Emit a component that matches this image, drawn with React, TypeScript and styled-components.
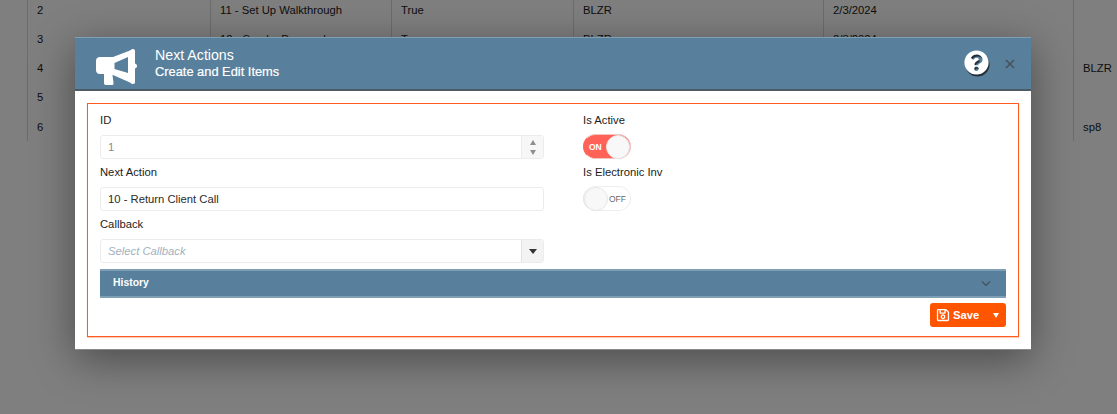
import React from 'react'
import styled, { createGlobalStyle } from 'styled-components'
import { FaQuestionCircle, FaRegSave } from 'react-icons/fa'
import { FaChevronDown } from 'react-icons/fa6'

const GlobalStyle = createGlobalStyle`
    html, body {
        margin: 0;
        padding: 0;
        height: 414px;
        overflow: hidden;
        background: #fff;
        font-family: "Liberation Sans", Arial, sans-serif;
        font-size: 11.25px;
        color: #1a1a1a;
    }
    * { box-sizing: border-box; }
`

const Grid = styled.div`
    margin-top: -5px;
    padding-left: 27px;
`

const GridRow = styled.div`
    display: grid;
    grid-template-columns: 183px 181px 182px 250px 250px 44px;
    height: 29.25px;
    align-items: stretch;
`

const GridCell = styled.div`
    border-left: 1px solid #d8d8d8;
    padding-left: 9px;
    display: flex;
    align-items: center;
    white-space: nowrap;
`

const Overlay = styled.div`
    position: absolute;
    inset: 0;
    background: rgba(0, 0, 0, 0.5);
    padding: 37px 86px 0 75px;
`

const Modal = styled.div`
    width: 956px;
    height: 312px;
    background: #fff;
    box-shadow: 0 1px 0 #8a8a8a, 0 10px 40px rgba(0, 0, 0, 0.42);
`

const Header = styled.div`
    height: 54px;
    background: #58809c;
    border-top: 1px solid #7e9fb4;
    border-bottom: 2px solid #4c5a64;
    display: flex;
    align-items: center;
    padding: 0 16px 0 20px;
    color: #fff;
`

const Megaphone = styled.svg`
    width: 44px;
    height: 40px;
    flex: none;
    margin-top: 6px;
`

const Titles = styled.div`
    margin-left: 16px;
    flex: 1;
    line-height: 16px;
`

const Title = styled.div`
    font-size: 14.2px;
`

const Subtitle = styled.div`
    font-size: 12.85px;
    margin-top: 1px;
    -webkit-text-stroke: 0.2px #fff;
`

const Help = styled.div`
    display: flex;
    font-size: 25px;
    color: #fff;
    filter: drop-shadow(1px 2px 0 #27303a);
    margin: -3px 16px 0 0;
`

const Close = styled.svg`
    width: 10px;
    height: 10px;
`

const Frame = styled.div`
    margin: 12px 12px 0;
    height: 234px;
    border: 1px solid #ff5a1f;
    box-shadow: 0 1px 1px rgba(255, 90, 31, 0.3);
    padding: 8px 12px 0;
`

const Columns = styled.div`
    display: grid;
    grid-template-columns: 444px 1fr;
    column-gap: 39px;
`

const Field = styled.div`
    height: 52px;
    display: flex;
    flex-direction: column;
`

const Label = styled.label`
    height: 16px;
    line-height: 16px;
    margin-bottom: 7px;
    color: #1c1c1c;
`

const InputBox = styled.div<{ $disabled?: boolean }>`
    height: 24px;
    border: 1px solid #ececec;
    border-radius: 3px;
    background: #fff;
    display: flex;
    align-items: stretch;
    color: ${p => (p.$disabled ? '#8c8c8c' : '#2b2b2b')};
`

const InputText = styled.span<{ $placeholder?: boolean }>`
    flex: 1;
    padding-left: 7px;
    display: flex;
    align-items: center;
    font-style: ${p => (p.$placeholder ? 'italic' : 'normal')};
    color: ${p => (p.$placeholder ? '#9fb0bd' : 'inherit')};
`

const SpinButtons = styled.span`
    width: 22px;
    background: #f7f7f7;
    border-left: 1px solid #ececec;
    display: flex;
    flex-direction: column;
    align-items: center;
    justify-content: center;
    gap: 5px;
    color: #8f8f8f;
`

const DropButton = styled(SpinButtons)`
    background: #f3f3f3;
    border-left: 1px solid #e2e2e2;
    color: #333;
`

const Triangle = styled.span<{ $up?: boolean; $size?: number }>`
    width: 0;
    height: 0;
    border-left: ${p => p.$size ?? 3.5}px solid transparent;
    border-right: ${p => p.$size ?? 3.5}px solid transparent;
    border-top: ${p => (p.$up ? '0' : '5px solid currentColor')};
    border-bottom: ${p => (p.$up ? '5px solid currentColor' : '0')};
`

const ToggleTrack = styled.div<{ $on?: boolean }>`
    width: 48px;
    height: 25px;
    margin-top: -1px;
    border-radius: 13px;
    border: 1px solid ${p => (p.$on ? '#f2c4c1' : '#eeeeee')};
    background: ${p => (p.$on ? '#ff6358' : '#fff')};
    border-left-color: ${p => (p.$on ? '#ff6358' : '#e4e4e4')};
    display: flex;
    flex-direction: ${p => (p.$on ? 'row' : 'row-reverse')};
    align-items: center;
    justify-content: space-between;
    font-size: 8.5px;
    font-weight: ${p => (p.$on ? 700 : 400)};
    color: ${p => (p.$on ? '#fff' : '#666')};
`

const ToggleLabel = styled.span<{ $on?: boolean }>`
    padding: ${p => (p.$on ? '0 0 0 5px' : '0 4px 0 0')};
`

const ToggleThumb = styled.span`
    width: 24px;
    height: 24px;
    border-radius: 50%;
    background: #f8f8f8;
    border: 1px solid #e6e6e6;
`

const HistoryBar = styled.div`
    margin-top: 1px;
    height: 29px;
    background: #58809c;
    border-top: 2px solid #7e9fb4;
    border-bottom: 2px solid #7e9fb4;
    display: flex;
    align-items: center;
    justify-content: space-between;
    padding: 0 15px 2px 13px;
    color: #fff;
    font-size: 10.4px;
    font-weight: 700;
`

const Chevron = styled(FaChevronDown)`
    color: #46535e;
    font-size: 10px;
`

const Footer = styled.div`
    display: flex;
    justify-content: flex-end;
    margin-top: 5px;
`

const SaveButton = styled.button`
    width: 76px;
    height: 24px;
    padding: 0;
    border: 0;
    border-radius: 3px;
    background: #ff5400;
    color: #fff;
    font: 700 11.25px "Liberation Sans", Arial, sans-serif;
    display: flex;
    align-items: center;
`

const SaveIcon = styled(FaRegSave)`
    font-size: 14px;
    margin: 0 3px 0 6px;
`

const SaveCaret = styled.span`
    margin-left: auto;
    margin-right: 7px;
    display: flex;
`

const rows = [
    ['2', '11 - Set Up Walkthrough', 'True', 'BLZR', '2/3/2024', ''],
    ['3', '12 - Send a Proposal', 'True', 'BLZR', '2/3/2024', ''],
    ['4', '', '', '', '', 'BLZR'],
    ['5', '', '', '', '', ''],
    ['6', '', '', '', '', 'sp8'],
]

function Toggle({ on }: { on?: boolean }) {
    return (
        <ToggleTrack $on={on}>
            <ToggleLabel $on={on}>{on ? 'ON' : 'OFF'}</ToggleLabel>
            <ToggleThumb />
        </ToggleTrack>
    )
}

function App() {
    return (
        <>
            <GlobalStyle />
            <Grid>
                {rows.map(row => (
                    <GridRow key={row[0]}>
                        {row.map((cell, i) => (
                            <GridCell key={i}>{cell}</GridCell>
                        ))}
                    </GridRow>
                ))}
            </Grid>
            <Overlay>
                <Modal>
                    <Header>
                        <Megaphone viewBox="0 0 44 40">
                            <path
                                fill="#fff"
                                fillRule="evenodd"
                                d="M38 2c1.500 0 2 1 2 2v12.500c1.500.5 2 1.500 2 2.500s-.5 2-2 2.500V35c0 1-.5 2-2 2-1 0-1.500-.5-3-1.500L18 28h-.5l1 8c.2 1.500-.5 2-1.500 2h-6c-1 0-2-.5-2-2v-9H5c-2.500 0-4-1.500-4-4v-9c0-2.500 1.500-4 4-4h13L35 3.500C36.500 2.500 37 2 38 2zM19.500 16v6L33 26V10z"
                            />
                        </Megaphone>
                        <Titles>
                            <Title>Next Actions</Title>
                            <Subtitle>Create and Edit Items</Subtitle>
                        </Titles>
                        <Help><FaQuestionCircle /></Help>
                        <Close viewBox="0 0 10 10">
                            <path d="M1 1l8 8M9 1l-8 8" stroke="#46525c" strokeWidth="1.6" />
                        </Close>
                    </Header>
                    <Frame>
                        <Columns>
                            <div>
                                <Field>
                                    <Label>ID</Label>
                                    <InputBox $disabled>
                                        <InputText>1</InputText>
                                        <SpinButtons><Triangle $up /><Triangle /></SpinButtons>
                                    </InputBox>
                                </Field>
                                <Field>
                                    <Label>Next Action</Label>
                                    <InputBox>
                                        <InputText>10 - Return Client Call</InputText>
                                    </InputBox>
                                </Field>
                                <Field>
                                    <Label>Callback</Label>
                                    <InputBox>
                                        <InputText $placeholder>Select Callback</InputText>
                                        <DropButton><Triangle $size={4} /></DropButton>
                                    </InputBox>
                                </Field>
                            </div>
                            <div>
                                <Field>
                                    <Label>Is Active</Label>
                                    <Toggle on />
                                </Field>
                                <Field>
                                    <Label>Is Electronic Inv</Label>
                                    <Toggle />
                                </Field>
                            </div>
                        </Columns>
                        <HistoryBar>
                            History
                            <Chevron />
                        </HistoryBar>
                        <Footer>
                            <SaveButton>
                                <SaveIcon />
                                Save
                                <SaveCaret><Triangle /></SaveCaret>
                            </SaveButton>
                        </Footer>
                    </Frame>
                </Modal>
            </Overlay>
        </>
    )
}

export default App
